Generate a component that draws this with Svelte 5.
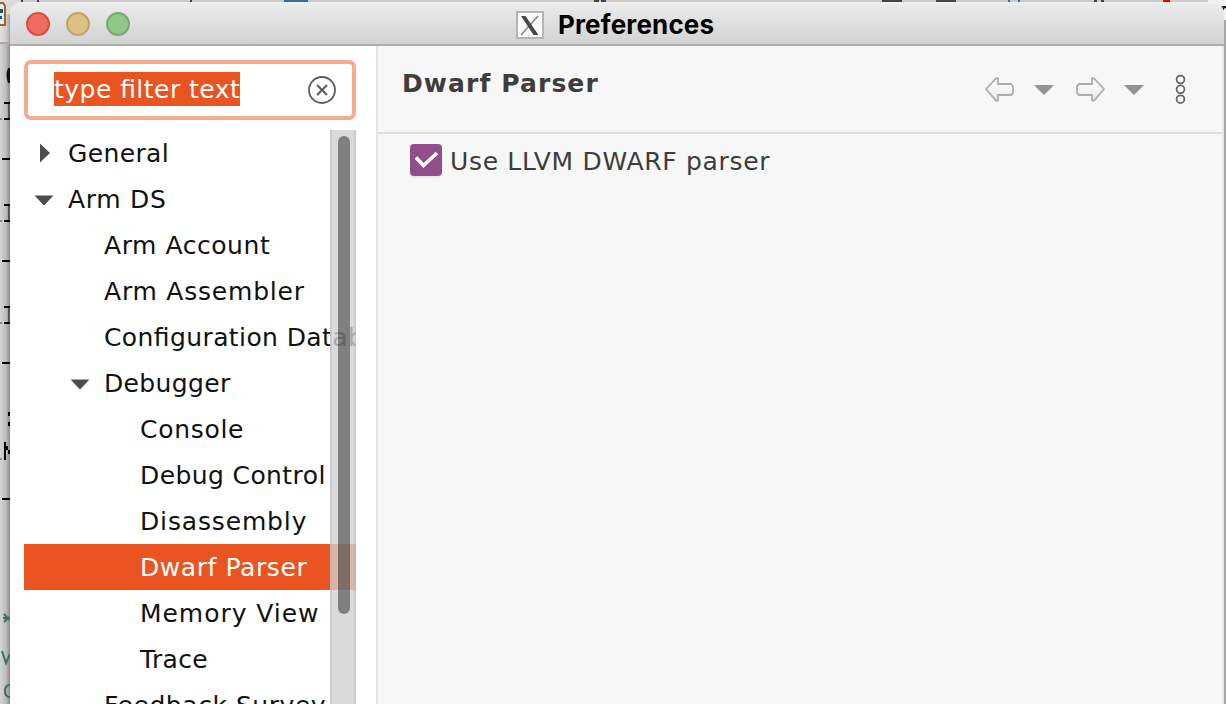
<script>
  const rows = [
    { label: 'General', level: 0, state: 'closed', track: 0.35 },
    { label: 'Arm DS', level: 0, state: 'open', track: 0.7 },
    { label: 'Arm Account', level: 1, track: 0.55 },
    { label: 'Arm Assembler', level: 1, track: 0.78 },
    { label: 'Configuration Database', level: 1, track: 0.4 },
    { label: 'Debugger', level: 1, state: 'open', track: 0.35 },
    { label: 'Console', level: 2, track: 0.7 },
    { label: 'Debug Control', level: 2, track: 0.4 },
    { label: 'Disassembly', level: 2, track: 0.85 },
    { label: 'Dwarf Parser', level: 2, selected: true, track: 0.58 },
    { label: 'Memory View', level: 2, track: 0.95 },
    { label: 'Trace', level: 2, track: 0.35 },
    { label: 'Feedback Survey', level: 1, track: 0.55 }
  ];
</script>

<div class="desktop">
  <svg class="behind" width="1226" height="704" viewBox="0 0 1226 704">
    <defs>
      <linearGradient id="shade"><stop offset="0" stop-color="#d4d4d4" /><stop offset=".6" stop-color="#bdbdbd" /><stop offset="1" stop-color="#888" /></linearGradient>
      <linearGradient id="edge"><stop offset="0" stop-color="#e2dfdc" /><stop offset=".6" stop-color="#d2cfcc" /><stop offset="1" stop-color="#a5a3a1" /></linearGradient>
    </defs>
    <rect width="1226" height="20" fill="#cbcbcb" />
    <rect y="0" width="20" height="44" fill="#dedbd8" />
    <rect y="14" width="10" height="30" fill="url(#edge)" />
    <rect y="44" width="10" height="660" fill="url(#shade)" />
    <rect y="42" width="10" height="2" fill="#aaa6a2" />
    <path d="M0 3H3L5 6V25H0" fill="#e6edf7" stroke="#8c6b25" stroke-width="2" />
    <path d="M0 9H3V13H0ZM0 16H2V19H0Z" fill="#294b7c" />
    <path d="M21 0h2v4h-2zM37 0h2v2h-2zM190 0h2v2h-2zM594 0h5v2h-5zM601 0h5v2h-5zM882 0h20v2h-20zM936 0h20v2h-20zM1094 0h3v2h-3zM1101 0h3v2h-3z" fill="#444" />
    <path d="M284 0h24v2h-24zM1008 0h2v2h-2zM1018 0h2v2h-2z" fill="#3f6b9d" />
    <path d="M1163 0h7v2h-7z" fill="#e00" />
    <path d="M1208 0h18v40h-18z" fill="#f1f1f1" />
    <path d="M1218 6h8v2h-1l-3 4-3-4h-1z" fill="#111" />
    <path d="M1224 20h2v684h-2z" fill="#a5a5a5" />
    <path d="M2 158h8v2H2zM2 260h8v2H2zM2 362h8v2H2zM2 498h8v2H2zM4 102h6v2H4zM4 118h6v2H4zM4 204h6v2H4zM4 220h6v2H4zM4 306h6v2H4zM4 322h6v2H4zM8 412h2v4H8zM8 422h2v4H8zM4 442h2v18H4zM6 446h2v4H6zM8 450h2v4H8z" fill="#000" />
    <path d="M8 68q-3 7 0 15h2V68z" fill="#111" />
    <path d="M8 104h2v14H8zM8 206h2v14H8zM8 308h2v14H8z" fill="#555" />
    <path d="M0 118h2v2H0zM0 220h2v2H0zM0 322h2v2H0zM0 458h2v2H0z" fill="#888" />
    <path d="M4 614l5 6M4 622l5-5M3 618h7M2 651l4 12 4-9M10 685q-5 0-5 6t5 6" fill="none" stroke="#3b705c" stroke-width="2" />
  </svg>

  <section class="window">
    <header class="titlebar">
      <div class="lights"><i class="red"></i><i class="amber"></i><i class="green"></i></div>
      <div class="title">
        <svg width="28" height="28" viewBox="0 0 28 28">
          <rect x="1" y="1" width="26" height="26" fill="#fbfbfb" stroke="#b4b4b4" stroke-width="2" />
          <path d="M22 5L5 24" stroke="#888" stroke-width="1.6" />
          <path d="M5 5h4.500l13 19h-5z" fill="#484848" />
        </svg>
        <span>Preferences</span>
      </div>
    </header>
    <div class="body">
      <aside>
        <div class="filter">
          <span class="sel">type filter text</span>
          <svg width="28" height="28" viewBox="0 0 28 28" fill="none" stroke="#5c5c5c"><circle cx="14" cy="14" r="13" stroke-width="1.8" /><path d="M9 9l10 10M19 9L9 19" stroke-width="2" /></svg>
        </div>
        <div class="tree">
          {#each rows as row}
            <div class="row l{row.level}" class:selected={row.selected}>
              <span class="twist">
                {#if row.state === 'closed'}
                  <svg width="20" height="20" viewBox="0 0 20 20"><path d="M6 0.500L16 10L6 19.500z" fill="#4d4d4d" /></svg>
                {:else if row.state === 'open'}
                  <svg width="20" height="20" viewBox="0 0 20 20"><path d="M0.500 6.500H19.500L10 16.500z" fill="#4d4d4d" /></svg>
                {/if}
              </span>
              <span class="label" style="letter-spacing: {row.track}px">{row.label}</span>
            </div>
          {/each}
          <div class="scroll"><div class="thumb"></div></div>
        </div>
      </aside>
      <main>
        <div class="head">
          <h1>Dwarf Parser</h1>
          <div class="tools">
            <svg width="210" height="40" viewBox="0 0 210 40">
              <defs><linearGradient id="arrow" x2="0" y2="1"><stop stop-color="#fff" /><stop offset="1" stop-color="#eaeaea" /></linearGradient></defs>
              <path d="M6 20L16 9.500H18V15H31L33 17V24L31 26H18V31.500H16z" fill="url(#arrow)" stroke="#adadad" stroke-width="1.8" />
              <path d="M54 16H74L64 26z" fill="#929292" />
              <path d="M124 20L114 9.500H112V15H99L97 17V24L99 26H112V31.500H114z" fill="url(#arrow)" stroke="#adadad" stroke-width="1.800" />
              <path d="M144 16H164L154 26z" fill="#929292" />
              <g fill="#fff" stroke="#666" stroke-width="1.800"><circle cx="200.500" cy="10.500" r="3.900" /><circle cx="200.500" cy="20.300" r="3.900" /><circle cx="200.500" cy="30.200" r="3.900" /></g>
            </svg>
          </div>
        </div>
        <label class="option">
          <svg width="32" height="34" viewBox="0 0 32 34"><rect y="2" width="32" height="32" rx="5" fill="#e9e9e9" /><rect width="32" height="32" rx="4" fill="#924d8b" /><path d="M6 13.500L13.500 21.500L27 9" fill="none" stroke="#fff" stroke-width="3.600" /></svg>
          <span>Use LLVM DWARF parser</span>
        </label>
      </main>
    </div>
  </section>
</div>

<style>
  :global(body) { margin: 0; overflow: hidden; }
  .desktop { position: relative; width: 1226px; height: 704px; overflow: hidden; box-sizing: border-box; padding: 2px 2px 0 10px; font-family: 'DejaVu Sans', sans-serif; font-size: 25px; font-feature-settings: 'liga' 1; }
  .behind { position: absolute; inset: 0; }
  .window { position: relative; height: 702px; display: flex; flex-direction: column; overflow: hidden; border-radius: 12px 12px 0 0; background: #f7f7f7; }
  .titlebar { height: 44px; box-sizing: border-box; border-bottom: 2px solid #adadad; border-top: 2px solid #f0f0f0; background: linear-gradient(#ebebeb, #d2d2d2); display: grid; grid-template-columns: 505px 1fr; align-items: center; flex: none; }
  .lights { display: flex; gap: 16px; padding-left: 16px; }
  .lights i { width: 24px; height: 24px; box-sizing: border-box; border-radius: 50%; }
  .red { background: #ed6b60; border: 2px solid #d84f44; }
  .amber { background: #dec083; border: 2px solid #bda36c; }
  .green { background: #90c689; border: 2px solid #77a970; }
  .title { display: flex; align-items: center; gap: 14px; padding-top: 2px; font: 700 26px/30px Inter, sans-serif; letter-spacing: .15px; color: #000; white-space: nowrap; }
  .title svg { margin-left: 1px; }
  .body { display: flex; flex: 1; min-height: 0; }
  aside { width: 366px; box-sizing: border-box; background: #fff; padding: 14px 20px 0 14px; flex: none; display: flex; flex-direction: column; }
  .filter { height: 60px; box-sizing: border-box; border: 4px solid #f5aa92; border-radius: 7px; display: flex; align-items: center; justify-content: space-between; padding: 0 16px 0 26px; flex: none; }
  .sel { background: #e95420; color: #fff; height: 34px; line-height: 35px; margin-top: -2px; white-space: nowrap; letter-spacing: .47px; }
  .tree { position: relative; margin-top: 10px; flex: 1; min-height: 0; overflow: hidden; }
  .row { height: 46px; display: flex; align-items: center; color: #111; white-space: nowrap; }
  .l0 { padding-left: 10px; }
  .l1 { padding-left: 46px; }
  .l2 { padding-left: 82px; }
  .twist { width: 20px; height: 20px; margin-right: 14px; flex: none; }
  .twist svg { display: block; }
  .selected { background: #e95420; color: #fff; }
  .scroll { position: absolute; top: 0; right: 0; width: 26px; height: 100%; box-sizing: border-box; background: rgba(208, 208, 208, .79); border: solid rgba(170, 170, 170, .3); border-width: 0 2px; }
  .thumb { width: 12px; height: 478px; margin: 6px 0 0 6px; border-radius: 6px; background: rgba(0, 0, 0, .41); }
  main { flex: 1; border-left: 2px solid #e5e5e5; border-right: 2px solid #e8e8e8; }
  .head { height: 88px; box-sizing: border-box; border-bottom: 2px solid #dedede; display: flex; justify-content: space-between; padding: 23px 32px 0 24px; }
  h1 { margin: 0; font-size: 25px; line-height: 30px; color: #3d3d3d; white-space: nowrap; letter-spacing: 1.1px; }
  .tools svg { display: block; }
  .option { display: flex; align-items: center; gap: 8px; padding: 10px 0 0 32px; color: #3d3d3d; white-space: nowrap; letter-spacing: .68px; }
</style>
